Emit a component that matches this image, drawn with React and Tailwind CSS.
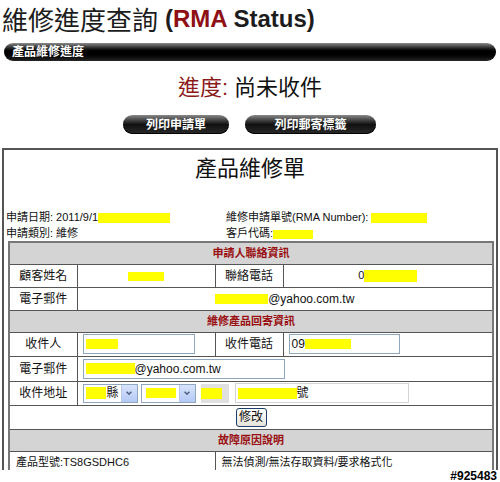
// RMA status page: title, progress bar header, status line, print buttons and the repair form table.
const SANS = "font-['Liberation_Sans','Noto_Sans_CJK_TC',sans-serif]"

function Y({ className }) {
  return <span className={`inline-block bg-[#ffff00] align-middle ${className}`} />
}

function PillButton({ children, className }) {
  return (
    <div
      className={`flex h-[19px] items-center justify-center rounded-full bg-gradient-to-b from-[#8a8a8a] via-[#111] to-[#2a2a2a] text-[12px] font-bold text-white shadow-[inset_0_-1px_0_#000] ${className}`}
    >
      {children}
    </div>
  )
}

function Field({ className, children }) {
  return (
    <div
      className={`flex h-[20px] items-center border border-[#8fa6bf] bg-white px-[2px] text-[12px] ${className}`}
    >
      {children}
    </div>
  )
}

function SelectBox({ className, children }) {
  return (
    <div className={`flex h-[19px] items-center border border-[#8fa6bf] bg-white pl-[2px] text-[12px] ${className}`}>
      <div className="flex flex-1 items-center">{children}</div>
      <div className="flex h-full w-[16px] items-center justify-center border-l border-[#b7c8ec] bg-gradient-to-b from-[#d8e4fc] to-[#b4c9f5]">
        <svg viewBox="0 0 10 10" className="size-[8px]" fill="none" stroke="#4d6185" strokeWidth="2">
          <path d="M2 3.5l3 3 3-3" />
        </svg>
      </div>
    </div>
  )
}

function Header({ children }) {
  return (
    <tr className="h-[22px]">
      <td
        colSpan={4}
        className="border border-[#555] bg-[#d4d4d4] text-center text-[11px] font-bold text-[#9a0f12]"
      >
        {children}
      </td>
    </tr>
  )
}

const cell = 'border border-[#555] p-0'

export default function App() {
  return (
    <div className={`h-[482px] w-[500px] bg-white text-[#111] ${SANS}`}>
      <div className="h-[470px] overflow-hidden">
        <h1 className="flex h-[36px] items-center whitespace-nowrap pl-[2px] pt-[2px] text-[#1c1c1c]">
          <span className="text-[26px] leading-[34px] font-['Noto_Sans_CJK_TC',sans-serif]">維修進度查詢</span>
          <span className="ml-[7px] text-[24px] leading-[34px] font-bold">
            (<span className="text-[#8e0f14]">RMA</span> Status)
          </span>
        </h1>

        <div className="mx-[4px] mt-[7px] flex h-[18px] items-center rounded-full bg-gradient-to-b from-[#8c8c8c] via-[#000] to-[#262626] pl-[8px] text-[12px] font-bold text-white">
          產品維修進度
        </div>

        <div className="mt-[13px] text-center text-[22px] leading-[28px]">
          <span className="text-[#8b1a1a]">進度:</span> 尚未收件
        </div>

        <div className="mt-[13px] flex justify-center gap-[16px] pr-[1px]">
          <PillButton className="w-[106px]">列印申請單</PillButton>
          <PillButton className="w-[131px]">列印郵寄標籤</PillButton>
        </div>

        <div className="mx-[2px] mt-[14px] border-2 border-b-0 border-[#555] px-[2px] pb-[4px] pt-[6px]">
          <div className="text-center text-[22px] leading-[26px]">產品維修單</div>

          <div className="mt-[27px] grid grid-cols-[220px_1fr] text-[11px] leading-[16px]">
            <div>
              申請日期: 2011/9/1
              <Y className="h-[10px] w-[72px]" />
            </div>
            <div>
              維修申請單號(RMA Number): <Y className="h-[10px] w-[56px]" />
            </div>
            <div>申請類別: 維修</div>
            <div>
              客戶代碼:
              <Y className="h-[9px] w-[40px]" />
            </div>
          </div>

          <table className="ml-[2px] w-[484px] table-fixed border-collapse border-2 border-[#777] text-[11px]">
            <colgroup>
              <col className="w-[68px]" />
              <col className="w-[138px]" />
              <col className="w-[68px]" />
              <col className="w-[210px]" />
            </colgroup>
            <tbody>
              <Header>申請人聯絡資訊</Header>
              <tr className="h-[23px]">
                <td className={`${cell} text-center text-[12px]`}>顧客姓名</td>
                <td className={`${cell} text-center`}>
                  <Y className="h-[9px] w-[36px]" />
                </td>
                <td className={`${cell} text-center text-[12px]`}>聯絡電話</td>
                <td className={`${cell} text-center`}>
                  0<Y className="h-[12px] w-[53px]" />
                </td>
              </tr>
              <tr className="h-[23px]">
                <td className={`${cell} text-center text-[12px]`}>電子郵件</td>
                <td colSpan={3} className={`${cell} text-center text-[12px]`}>
                  <Y className="h-[10px] w-[53px]" />@yahoo.com.tw
                </td>
              </tr>

              <Header>維修產品回寄資訊</Header>
              <tr className="h-[24px]">
                <td className={`${cell} text-center text-[12px]`}>收件人</td>
                <td className={`${cell} pl-[5px]`}>
                  <Field className="w-[112px]">
                    <Y className="h-[10px] w-[32px]" />
                  </Field>
                </td>
                <td className={`${cell} text-center text-[12px]`}>收件電話</td>
                <td className={`${cell} pl-[5px]`}>
                  <Field className="w-[111px]">
                    09
                    <Y className="h-[10px] w-[46px]" />
                  </Field>
                </td>
              </tr>
              <tr className="h-[25px]">
                <td className={`${cell} text-center text-[12px]`}>電子郵件</td>
                <td colSpan={3} className={`${cell} pl-[5px]`}>
                  <Field className="w-[202px]">
                    <Y className="h-[11px] w-[49px]" />
                    @yahoo.com.tw
                  </Field>
                </td>
              </tr>
              <tr className="h-[24px]">
                <td className={`${cell} text-center text-[12px]`}>收件地址</td>
                <td colSpan={3} className={`${cell} pl-[5px]`}>
                  <div className="flex items-center">
                    <SelectBox className="w-[55px]">
                      <Y className="h-[12px] w-[20px]" />
                      <span className="ml-[1px]">縣</span>
                    </SelectBox>
                    <SelectBox className="ml-[3px] w-[55px]">
                      <Y className="ml-[2px] h-[10px] w-[30px]" />
                    </SelectBox>
                    <div className="ml-[5px] flex h-[19px] w-[28px] items-center bg-[#e0e0e0]">
                      <Y className="h-[11px] w-[21px]" />
                    </div>
                    <Field className="ml-[6px] h-[19px] w-[174px] border-[#d4d4d4]">
                      <Y className="h-[11px] w-[59px]" />
                      號
                    </Field>
                  </div>
                </td>
              </tr>
              <tr className="h-[24px]">
                <td colSpan={4} className={`${cell} text-center`}>
                  <button className="inline-flex h-[19px] w-[31px] items-center justify-center rounded-[3px] border border-[#1e3f6a] bg-gradient-to-b from-white to-[#e6e4da] text-[12px] leading-none">
                    修改
                  </button>
                </td>
              </tr>

              <Header>故障原因說明</Header>
              <tr className="h-[23px]">
                <td colSpan={2} className={`${cell} pl-[6px]`}>
                  產品型號:TS8GSDHC6
                </td>
                <td colSpan={2} className={`${cell} pl-[6px]`}>
                  無法偵測/無法存取資料/要求格式化
                </td>
              </tr>
            </tbody>
          </table>
        </div>
      </div>
      <div className="pr-[3px] text-right text-[12px] font-bold leading-[12px] text-black [text-shadow:1px_0_0_#fff,-1px_0_0_#fff,0_1px_0_#fff,0_-1px_0_#fff]">
        #925483
      </div>
    </div>
  )
}
